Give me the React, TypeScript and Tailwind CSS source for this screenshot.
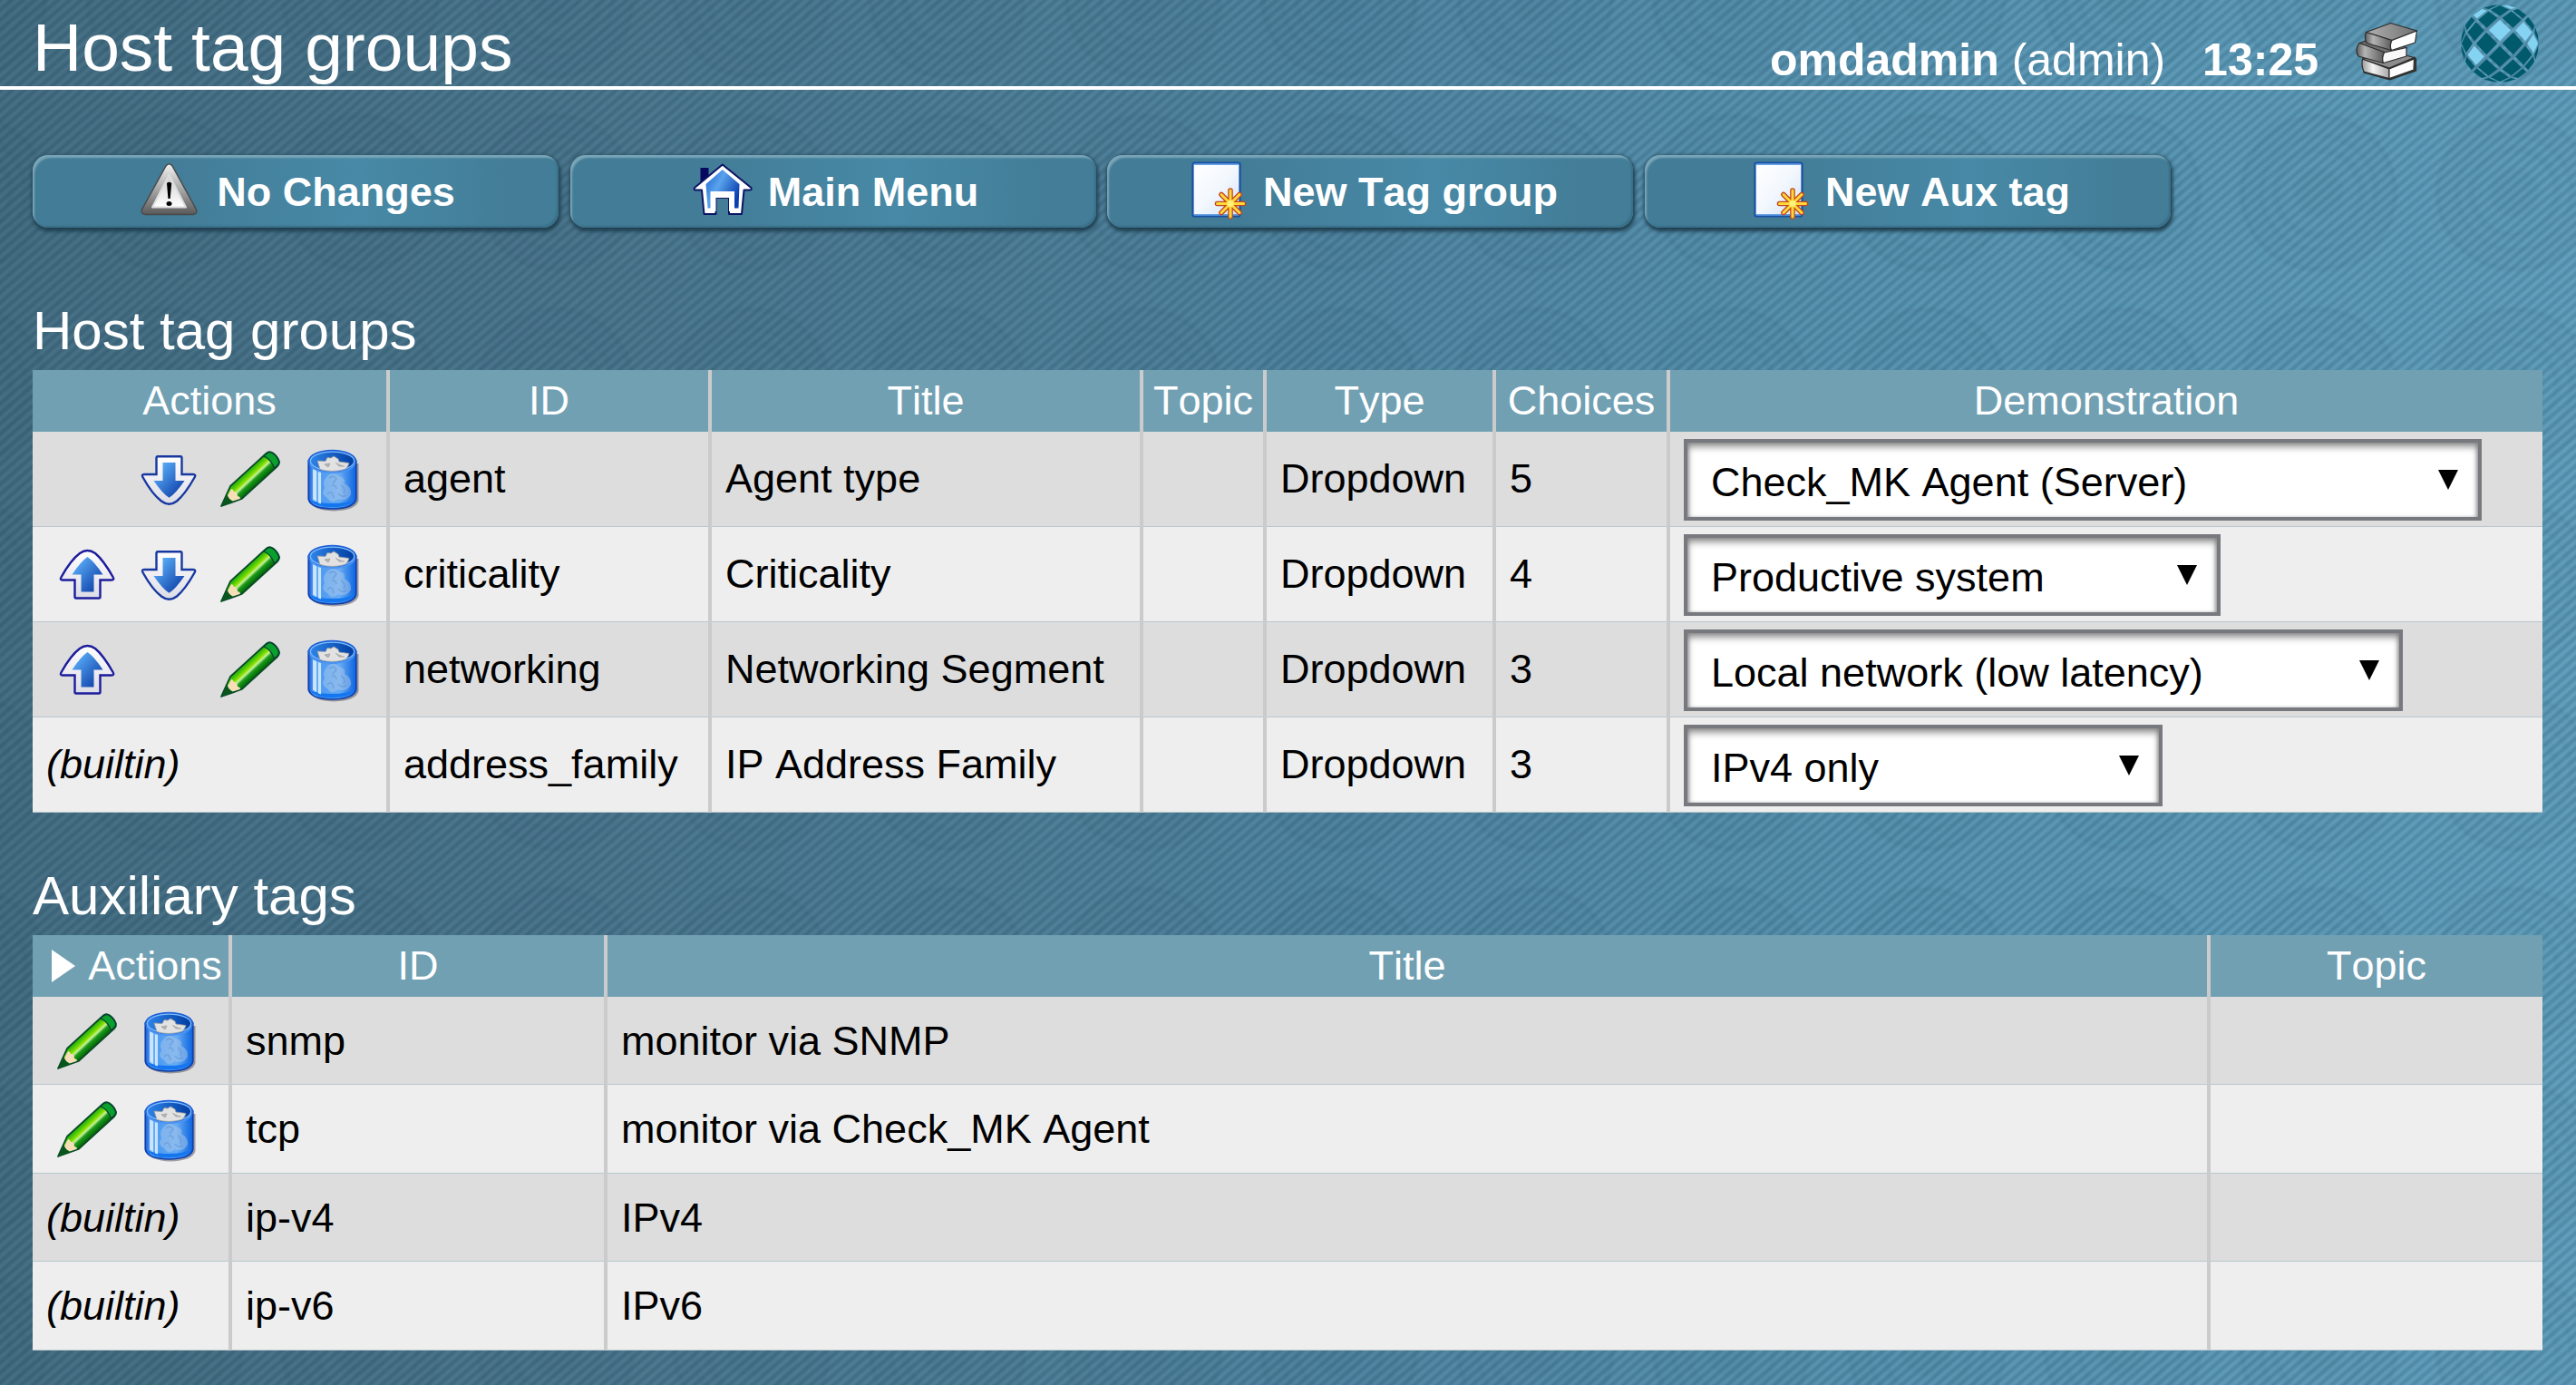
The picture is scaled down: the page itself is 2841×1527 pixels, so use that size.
import type { ReactNode } from "react";

function SharedDefs() {
  return (
    <svg className="absolute h-0 w-0" aria-hidden="true">
      <defs>
        <linearGradient id="arrowFill" x1="0" y1="0" x2="1" y2="1">
          <stop offset="0.1" stopColor="#5cb2fb" />
          <stop offset="0.9" stopColor="#0f3fa8" />
        </linearGradient>
        <linearGradient id="arrowEdge" x1="0" y1="0" x2="0" y2="1">
          <stop offset="0" stopColor="#ffffff" />
          <stop offset="1" stopColor="#dcdce6" />
        </linearGradient>
        <linearGradient id="pencilBody" gradientUnits="userSpaceOnUse" x1="30" y1="24" x2="44" y2="39">
          <stop offset="0" stopColor="#0a9a0a" />
          <stop offset="0.3" stopColor="#3fc20a" />
          <stop offset="0.5" stopColor="#8ae000" />
          <stop offset="0.62" stopColor="#c8f39a" />
          <stop offset="0.76" stopColor="#1c9a1c" />
          <stop offset="1" stopColor="#067006" />
        </linearGradient>
        <linearGradient id="canBody" x1="0" y1="0" x2="1" y2="0">
          <stop offset="0" stopColor="#1459d6" />
          <stop offset="0.14" stopColor="#6db4fb" />
          <stop offset="0.3" stopColor="#4f9cf2" />
          <stop offset="0.65" stopColor="#69acf3" />
          <stop offset="1" stopColor="#0a63e0" />
        </linearGradient>
        <linearGradient id="canInside" x1="0" y1="0" x2="1" y2="0">
          <stop offset="0" stopColor="#2f86ec" />
          <stop offset="1" stopColor="#003a9e" />
        </linearGradient>
        <linearGradient id="warnEdge" x1="0" y1="0" x2="0" y2="1">
          <stop offset="0" stopColor="#f2f2f2" />
          <stop offset="0.5" stopColor="#a8a8a8" />
          <stop offset="1" stopColor="#5a5a5a" />
        </linearGradient>
        <linearGradient id="warnFill" x1="0" y1="0" x2="0" y2="1">
          <stop offset="0" stopColor="#cfcfcf" />
          <stop offset="1" stopColor="#ffffff" />
        </linearGradient>
        <linearGradient id="houseFill" x1="0" y1="0" x2="1" y2="0.6">
          <stop offset="0" stopColor="#1b5fd0" />
          <stop offset="0.45" stopColor="#5aa4ec" />
          <stop offset="1" stopColor="#0b3fb0" />
        </linearGradient>
        <linearGradient id="sheetFill" x1="0" y1="0" x2="1" y2="1">
          <stop offset="0" stopColor="#ffffff" />
          <stop offset="0.5" stopColor="#f3f8fe" />
          <stop offset="1" stopColor="#cfe0f5" />
        </linearGradient>
        <linearGradient id="bookTop" x1="0" y1="0" x2="1" y2="0">
          <stop offset="0" stopColor="#b0b0b0" />
          <stop offset="1" stopColor="#707070" />
        </linearGradient>
        <linearGradient id="bookSpine" x1="0" y1="0" x2="1" y2="0">
          <stop offset="0" stopColor="#5c5c5c" />
          <stop offset="0.3" stopColor="#b4b4b4" />
          <stop offset="1" stopColor="#5a5a5a" />
        </linearGradient>
        <linearGradient id="bookLight" x1="0" y1="0" x2="1" y2="0">
          <stop offset="0" stopColor="#9a9a9a" />
          <stop offset="0.4" stopColor="#f4f4f4" />
          <stop offset="1" stopColor="#a8a8a8" />
        </linearGradient>
      </defs>
    </svg>
  );
}

function Icon({ children }: { children: ReactNode }) {
  return (
    <svg viewBox="0 0 72 72" className="h-[72px] w-[72px] shrink-0 overflow-visible">
      {children}
    </svg>
  );
}

function DownIcon() {
  return (
    <Icon>
      <path
        d="M24 10.300H49Q50.500 10.300 50.500 12V30H63Q66.500 30 64.500 33.500Q54 52 45 59.500Q36.500 66 28 59.500Q18 52 7.700 33.500Q5.700 30 9 30H22.500V12Q22.500 10.300 24 10.300Z"
        fill="url(#arrowEdge)"
        stroke="#1738a0"
        strokeWidth="2.400"
      />
      <path d="M29.500 17H43.500V37H53.500Q44 51 36.500 55.800Q29 51 19.500 37H29.500Z" fill="url(#arrowFill)" />
    </Icon>
  );
}

function UpIcon() {
  return (
    <Icon>
      <path
        d="M24 61.500H49Q50.500 61.500 50.500 60V41.500H63Q66.500 41.500 64.500 38Q54 19.500 45 12Q36.500 6 28 12Q18 19.500 7.700 38Q5.700 41.500 9 41.500H22.500V60Q22.500 61.500 24 61.500Z"
        fill="url(#arrowEdge)"
        stroke="#1c1c9c"
        strokeWidth="2.400"
      />
      <path d="M29.500 54.500H43.500V35.500H53.500Q44 21 36.500 16Q29 21 19.500 35.500H29.500Z" fill="url(#arrowFill)" />
    </Icon>
  );
}

function PencilIcon() {
  return (
    <Icon>
      <path
        d="M4 65L14 43L53.500 7Q57 3.500 61 6.500Q66 10 68 16Q68.500 18.500 66 21L26.500 57Z"
        fill="url(#pencilBody)"
        stroke="#0a4a28"
        strokeWidth="1.800"
        strokeLinejoin="round"
      />
      <path d="M53.500 7.500Q57 4 61 7Q66 10.500 67.500 16Q68 18 65.500 20.500L62.500 23Q59 13.500 51 10Z" fill="#0aa02c" stroke="#083c34" strokeWidth="1.200" />
      <path d="M14.500 47Q16 44.500 18 49Q22 49 22 54Q26 55 24.500 57L15 60L10 55.500Z" fill="#f6dfb8" />
      <path d="M4 65.500L10.500 52Q12 57.500 17 59.500Z" fill="#07571c" />
    </Icon>
  );
}

function TrashIcon() {
  return (
    <Icon>
      <path d="M12 16V59Q14 69.500 38 70.500Q63 69.500 65.500 59V18Z" fill="#3c3c46" opacity="0.450" />
      <path d="M10.200 15V57Q12 67.500 36.500 68Q61 67.500 62.800 57V15Z" fill="url(#canBody)" stroke="#0d3fae" strokeWidth="1.600" />
      <path d="M12 58Q16 66 36.500 66.500Q57 66 61 57Q52 62 36.500 62Q20 62 12 58Z" fill="#1577ef" />
      <path d="M15 24L19 26V60L15 57.500ZM21 27L24 28V62.500L21 61.500Z" fill="#d5eafc" opacity="0.900" />
      <path
        d="M30 33Q37 25 44 32Q52 34 50 40Q58 44 57 52Q52 61 43 57Q36 64 31 56Q23 52 28 45Q25 38 30 33Z"
        fill="#a9c8ea"
        opacity="0.500"
      />
      <path
        d="M33 34Q38 30 41 35L37 40M36 43Q40 40 41 46M31 52Q36 46 38 56M46 42Q52 46 49 51M43 51Q46 56 52 53"
        fill="none"
        stroke="#5b90cc"
        strokeWidth="1.400"
        opacity="0.550"
      />
      <ellipse cx="36.500" cy="15.500" rx="25.800" ry="11.800" fill="url(#canInside)" stroke="#1c5fd8" strokeWidth="2" />
      <ellipse cx="36.500" cy="15.500" rx="24.200" ry="10.400" fill="none" stroke="#7dbcfb" strokeWidth="1.400" />
      <path d="M20 15L29 15.500L31 11.500L35 12L38 10L43 13L44 16L55 17.500Q54 22 50 24.500Q36 28.500 23 24.500Z" fill="#e2e2e2" stroke="#9a9a9a" strokeWidth="0.800" />
      <path d="M28 19L34 18L32 22ZM40 17L44 21L50 21" fill="#b4b4b4" stroke="#a8a8a8" strokeWidth="1" />
      <path d="M12 18Q15 27.500 36.500 28Q58 27.500 61 18" fill="none" stroke="#4a94f2" strokeWidth="2" />
    </Icon>
  );
}

function WarningIcon() {
  return (
    <Icon>
      <path
        d="M33 8Q36.500 3.500 40 8L66.500 56Q68 61 63 61.500H10Q5 61 6.500 56Z"
        fill="url(#warnEdge)"
        stroke="#4a4a4a"
        strokeWidth="1.500"
      />
      <path d="M36.500 18L55 53.500H18Z" fill="url(#warnFill)" stroke="#dedede" strokeWidth="2" strokeLinejoin="round" />
      <path d="M34 27Q36.500 24.500 39.200 27L37.700 44H35.400Z" fill="#000" />
      <ellipse cx="36.500" cy="49.500" rx="3" ry="2.500" fill="#000" />
    </Icon>
  );
}

function HouseIcon() {
  return (
    <Icon>
      <path d="M14.500 10H23.500V22L14.500 30Z" fill="#06095e" />
      <path
        d="M38.800 6.500L70.500 32Q71.500 34.500 68.500 34.500H62.500L60 61H46V43H31.500V61H18.500L16 34.500H9.500Q6.500 34.500 8 32Z"
        fill="#fff"
        stroke="#0b1464"
        strokeWidth="2"
        strokeLinejoin="round"
      />
      <path d="M38.800 12L57.500 28L56.500 54.500H52V36H25.500V54.500H22.500L20.500 28Z" fill="url(#houseFill)" />
      <path d="M27.500 38H49.500V58H46V43H31.500V58H27.500Z" fill="#fff" />
    </Icon>
  );
}

function NewPageIcon() {
  const rays = "M53 35V64M38.500 49.500H67.500M43 39.500L63 59.500M63 39.500L43 59.500";
  return (
    <Icon>
      <rect x="11.500" y="4.500" width="52" height="59" rx="2" fill="url(#sheetFill)" stroke="#1750a4" strokeWidth="2.200" />
      <path d="M13 6H62M13 62H62" stroke="#3f86dc" strokeWidth="1.500" />
      <path d={rays} stroke="#c4471a" strokeWidth="5.600" strokeLinecap="round" />
      <path d={rays} stroke="#ffd83a" strokeWidth="3" strokeLinecap="round" />
      <circle cx="53" cy="49.500" r="3.500" fill="#fff27a" />
    </Icon>
  );
}

function BooksIcon() {
  return (
    <svg viewBox="0 0 72 66" className="h-[66px] w-[72px] shrink-0 overflow-visible" stroke="#2c2c2c" strokeWidth="1.200" strokeLinejoin="round">
      <path d="M9 42L38 51L66 39L67.500 41V54L38.500 64L10 56Z" fill="#3a3a3a" />
      <path d="M8.500 41L38 52V62.500L10 55Q7 48 8.500 41Z" fill="url(#bookLight)" />
      <path d="M38 52L65.500 41L65 53L38 62.500Z" fill="#fdfdfd" />
      <path d="M8.500 41L38 32L65.500 39.500L38 51Z" fill="#8c8c8c" />
      <path d="M5 23.500L30 15L57.500 29L32 34.500Z" fill="#6f6f6f" />
      <path d="M5 23.500L32.500 33.500Q29.500 40 31.500 45.500L4 38Q-0.500 31 5 23.500Z" fill="url(#bookSpine)" />
      <path d="M32.500 34L57 28.500V38L31.500 45.500Q29.500 40 32.500 34Z" fill="#f8f8f8" />
      <path d="M12.500 11.500L39.700 1.500L68.500 10L41 20.500Z" fill="url(#bookTop)" />
      <path d="M12.500 11.500L41 20.500Q38 26 40.500 31.500L13 23.500Q10 17 12.500 11.500Z" fill="url(#bookSpine)" />
      <path d="M41 20.500L68.500 10L66.500 23L40.500 31.500Q38 26 41 20.500Z" fill="#fff" />
    </svg>
  );
}

const GLOBE_RADIUS = 43;
const GLOBE_STEP = 0.357;
const LIT_CELLS = ["-1,-1", "0,-2", "1,-2", "-1,1", "-3,-1", "-2,-3", "2,2"];

function projectOnGlobe(i: number, j: number) {
  const u = (i - j) * GLOBE_STEP;
  const v = (i + j) * GLOBE_STEP;
  const angle = Math.hypot(u, v);
  if (angle === 0) return "0,0";
  const r = (GLOBE_RADIUS * Math.sin(Math.min(angle, Math.PI / 2))) / angle;
  return `${(u * r).toFixed(2)},${(v * r).toFixed(2)}`;
}

function globeCells() {
  const cells: { key: string; points: string }[] = [];
  const inset = 0.09;
  for (let i = -5; i < 5; i++) {
    for (let j = -5; j < 5; j++) {
      const angle = Math.hypot(i - j, i + j + 1) * GLOBE_STEP;
      if (angle > 1.8) continue;
      const lo = inset;
      const hi = 1 - inset;
      const points = [
        projectOnGlobe(i + lo, j + lo),
        projectOnGlobe(i + hi, j + lo),
        projectOnGlobe(i + hi, j + hi),
        projectOnGlobe(i + lo, j + hi),
      ].join(" ");
      cells.push({ key: `${i},${j}`, points });
    }
  }
  return cells;
}

function GlobeIcon() {
  return (
    <svg viewBox="-44 -44 88 88" className="h-[88px] w-[88px] shrink-0">
      {globeCells().map((cell) => (
        <polygon key={cell.key} points={cell.points} fill={LIT_CELLS.includes(cell.key) ? "#84d3f3" : "#005a6c"} />
      ))}
    </svg>
  );
}

function ContextButton({ icon, label }: { icon: ReactNode; label: string }) {
  return (
    <button
      type="button"
      className="flex h-[80px] w-[580px] items-center justify-center gap-[17px] rounded-[17px] bg-[linear-gradient(90deg,#437c97_0%,#437c97_25%,#4789a6_62%,#437d97_92%)] text-[45px] leading-[50px] font-bold text-white shadow-[inset_3px_4px_2px_-1px_#7ba6b9,inset_-2px_-2px_2px_#3a6f88,1px_3px_4px_1px_#1f3f50,0_0_4px_#35586a]"
    >
      {icon}
      <span className="pt-[2px] whitespace-nowrap">{label}</span>
    </button>
  );
}

function Select({ label, width }: { label: string; width: string }) {
  return (
    <div
      className={`${width} flex h-[90px] items-center justify-between border-4 border-[#77797f] bg-white pr-[22px] pl-[26px] shadow-[inset_0_5px_8px_-1px_#808080,inset_3px_0_4px_-2px_#999,inset_-3px_0_4px_-2px_#999]`}
    >
      <span className="pt-[7px] leading-[50px]">{label}</span>
      <svg viewBox="0 0 22 22" className="h-[22px] w-[22px]">
        <path d="M0 0H22L11 22Z" fill="#000" />
      </svg>
    </div>
  );
}

function Slot({ children }: { children?: ReactNode }) {
  return <div className="flex h-[72px] w-[90px] items-center justify-center">{children}</div>;
}

const cellBase = "flex items-center border-[#cbcbcb] pl-[15px] not-last:border-r-4";
const headBase = "flex items-center justify-center border-[#cbcbcb] not-last:border-r-4";

function HeadRow({ cells, columns }: { cells: ReactNode[]; columns: string }) {
  return (
    <div className={`${columns} grid h-[68px] bg-[#71a0b3] text-white`}>
      {cells.map((cell, i) => (
        <div key={i} className={headBase}>
          {cell}
        </div>
      ))}
    </div>
  );
}

function Row({ cells, columns, height, odd }: { cells: ReactNode[]; columns: string; height: string; odd: boolean }) {
  return (
    <div className={`${columns} ${height} ${odd ? "bg-[#dddddd]" : "bg-[#eeeeee]"} grid shadow-[inset_0_-1px_0_#b9c7cd]`}>
      {cells.map((cell, i) => (
        <div key={i} className={cellBase}>
          {cell}
        </div>
      ))}
    </div>
  );
}

const groupColumns = "grid-cols-[394px_355px_476px_136px_253px_192px_962px]";
const auxColumns = "grid-cols-[220px_414px_1768px_366px]";

const groups = [
  { up: false, down: true, builtin: false, id: "agent", title: "Agent type", choices: 5, demo: "Check_MK Agent (Server)", width: "w-[880px]" },
  { up: true, down: true, builtin: false, id: "criticality", title: "Criticality", choices: 4, demo: "Productive system", width: "w-[592px]" },
  { up: true, down: false, builtin: false, id: "networking", title: "Networking Segment", choices: 3, demo: "Local network (low latency)", width: "w-[793px]" },
  { up: false, down: false, builtin: true, id: "address_family", title: "IP Address Family", choices: 3, demo: "IPv4 only", width: "w-[528px]" },
];

const auxTags = [
  { builtin: false, id: "snmp", title: "monitor via SNMP", height: "h-[97px]" },
  { builtin: false, id: "tcp", title: "monitor via Check_MK Agent", height: "h-[98px]" },
  { builtin: true, id: "ip-v4", title: "IPv4", height: "h-[97px]" },
  { builtin: true, id: "ip-v6", title: "IPv6", height: "h-[98px]" },
];

export default function App() {
  return (
    <div className="relative isolate h-[1527px] w-[2841px] overflow-hidden bg-[linear-gradient(90deg,#436c82_0%,#49768d_25%,#4e839f_50%,#5795b3_75%,#5f9fbd_100%)] font-['Liberation_Sans',Arial,sans-serif] text-[45px] leading-[50px] text-black [font-kerning:none]">
      <SharedDefs />
      <div className="absolute inset-0 -z-10 bg-[radial-gradient(circle_at_center,rgba(20,60,80,0.06)_0_24px,rgba(20,60,80,0.02)_30px_42px,rgba(20,60,80,0.06)_45px_48px,rgba(20,60,80,0.02)_54px_58px,rgba(20,60,80,0.06)_62px_64px,rgba(20,60,80,0.03)_68px_80px,rgba(20,60,80,0.07)_83px_85px,transparent_89px)] bg-[size:216px_213px] bg-[position:-143px_106px]" />
      <div className="absolute inset-0 -z-10 bg-[repeating-linear-gradient(139deg,rgba(20,55,75,0.21)_0px,rgba(255,255,255,0.03)_4.200px,rgba(20,55,75,0.21)_8.400px)]" />

      <header className="flex h-[99px] items-start justify-between border-b-4 border-white pr-[40px] pl-[36px] text-white">
        <h1 className="pt-[10px] text-[75px] leading-[84px]">Host tag groups</h1>
        <div className="flex items-start">
          <div className="pt-[38px] text-[50px] leading-[56px] whitespace-pre">
            <b>omdadmin</b> (admin)
          </div>
          <b className="pt-[38px] pl-[41px] text-[50px] leading-[56px]">13:25</b>
          <div className="pt-[24px] pl-[40px]">
            <BooksIcon />
          </div>
          <div className="pt-[4px] pl-[44px]">
            <GlobeIcon />
          </div>
        </div>
      </header>

      <main className="w-[2804px] pl-[36px]">
        <nav className="flex gap-[12.500px] pt-[72px]">
          <ContextButton icon={<WarningIcon />} label="No Changes" />
          <ContextButton icon={<HouseIcon />} label="Main Menu" />
          <ContextButton icon={<NewPageIcon />} label="New Tag group" />
          <ContextButton icon={<NewPageIcon />} label="New Aux tag" />
        </nav>

        <h2 className="mt-[80px] mb-[9px] text-[60px] leading-[68px] text-white">Host tag groups</h2>
        <section>
          <HeadRow columns={groupColumns} cells={["Actions", "ID", "Title", "Topic", "Type", "Choices", "Demonstration"]} />
          {groups.map((g, i) => (
            <Row
              key={g.id}
              columns={groupColumns}
              height="h-[105px]"
              odd={i % 2 === 0}
              cells={[
                g.builtin ? (
                  <i className="pb-[2px]">(builtin)</i>
                ) : (
                  <div className="flex">
                    <Slot>{g.up && <UpIcon />}</Slot>
                    <Slot>{g.down && <DownIcon />}</Slot>
                    <Slot>
                      <PencilIcon />
                    </Slot>
                    <Slot>
                      <TrashIcon />
                    </Slot>
                  </div>
                ),
                <span className="pb-[2px]">{g.id}</span>,
                <span className="pb-[2px]">{g.title}</span>,
                "",
                <span className="pb-[2px]">Dropdown</span>,
                <span className="pb-[2px]">{g.choices}</span>,
                <Select label={g.demo} width={g.width} />,
              ]}
            />
          ))}
        </section>

        <h2 className="mt-[58px] mb-[9px] text-[60px] leading-[68px] text-white">Auxiliary tags</h2>
        <section>
          <HeadRow
            columns={auxColumns}
            cells={[
              <div className="flex items-center gap-[14px] pl-[14px]">
                <svg viewBox="0 0 26 36" className="h-[36px] w-[26px]">
                  <path d="M0 0L26 18L0 36Z" fill="#fff" />
                </svg>
                Actions
              </div>,
              "ID",
              "Title",
              "Topic",
            ]}
          />
          {auxTags.map((t, i) => (
            <Row
              key={t.id}
              columns={auxColumns}
              height={t.height}
              odd={i % 2 === 0}
              cells={[
                t.builtin ? (
                  <i>(builtin)</i>
                ) : (
                  <div className="flex pt-[2px]">
                    <Slot>
                      <PencilIcon />
                    </Slot>
                    <Slot>
                      <TrashIcon />
                    </Slot>
                  </div>
                ),
                t.id,
                t.title,
                "",
              ]}
            />
          ))}
        </section>
      </main>
    </div>
  );
}
